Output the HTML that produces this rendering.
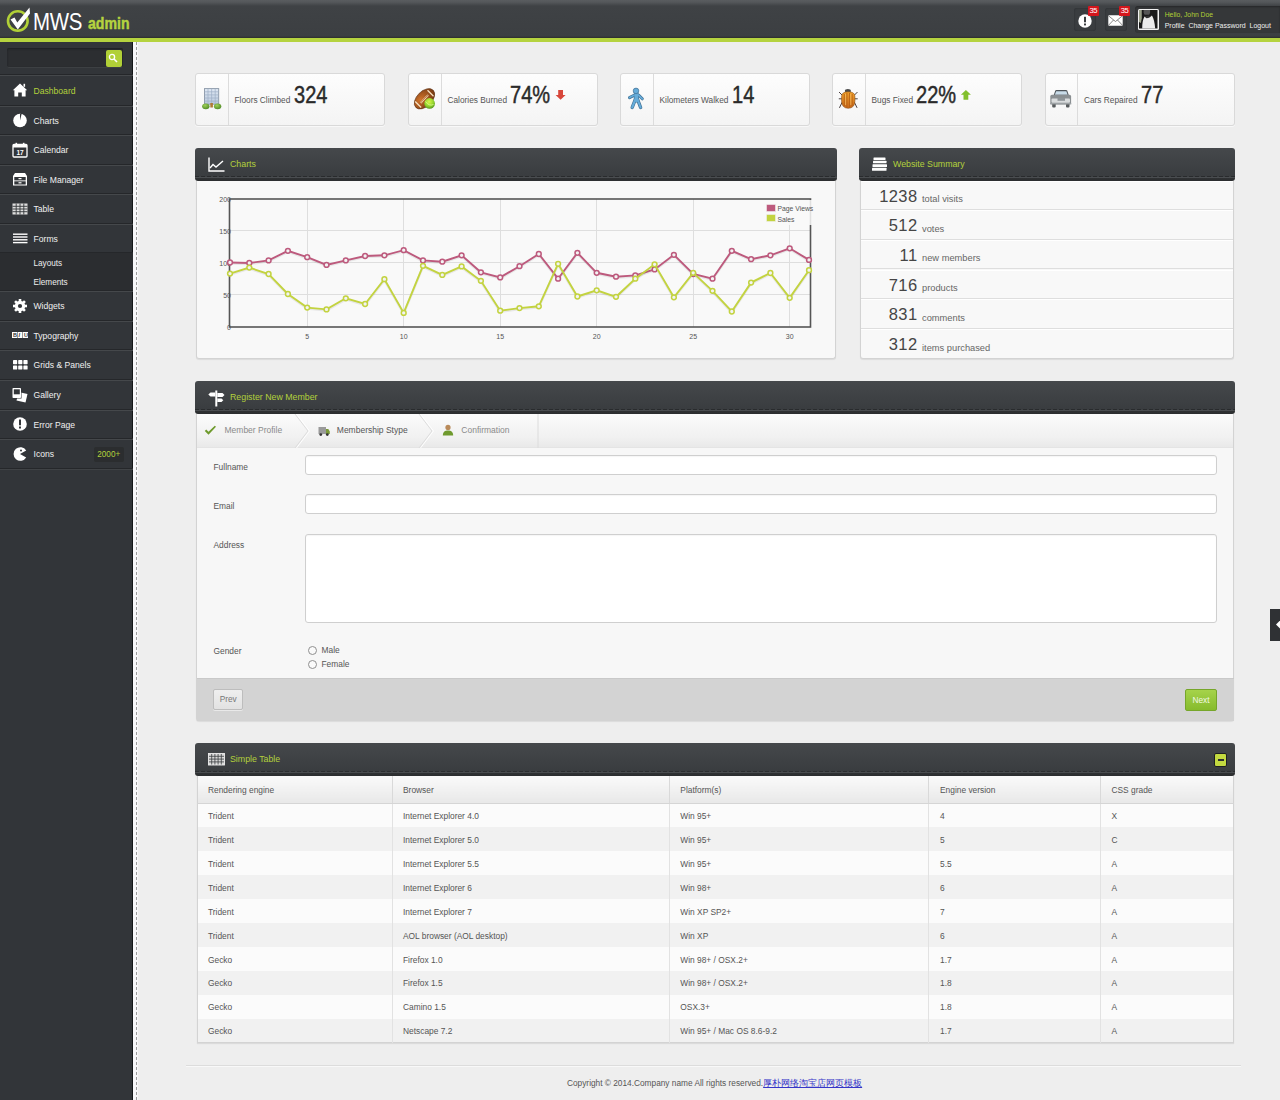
<!DOCTYPE html>
<html><head><meta charset="utf-8">
<style>
*{margin:0;padding:0;box-sizing:border-box}
html,body{width:1280px;height:1100px;overflow:hidden}
body{font-family:"Liberation Sans",sans-serif;background:#eeeeee;position:relative;color:#444}
.a{position:absolute}
#hdr{left:0;top:0;width:1280px;height:38px;background:linear-gradient(#5a5d60 0,#55585b 2px,#3f4245 6px,#3c3f42 36px,#2c2e2c 38px)}
#gline{left:0;top:38px;width:1280px;height:4px;background:#b5d33f}
#side{left:0;top:42px;width:133px;height:1058px;background:#323539;border-right:1.5px solid #141618}
#sideline{left:133px;top:42px;width:5px;height:1058px;background:#f7f7f9}
#dash{left:136px;top:42px;width:1px;height:1058px;background:repeating-linear-gradient(#9a9a9a 0,#9a9a9a 3px,transparent 3px,transparent 5px)}
.mi{position:absolute;left:0;width:133px;border-top:1px solid #45484b;border-bottom:1px solid #25272a;color:#f0f0f0;font-size:8.6px}
.mi .t{position:absolute;left:33.5px;top:50%;margin-top:-4.3px;line-height:10px;white-space:nowrap}
.mi svg{position:absolute;left:12px;top:50%;margin-top:-8px}
.mi.act .t{color:#b3d13c}
.sub{position:absolute;left:0;width:133px;background:#2b2d30;color:#eee;font-size:8.2px}
.sub div{position:absolute;left:33.5px;line-height:10px}

.box{position:absolute;top:72.5px;width:190px;height:53.5px;border:1px solid #d9d9d9;border-radius:3px;background:linear-gradient(#fdfdfd,#f4f4f4);box-shadow:0 1px 0 rgba(255,255,255,.6)}
.box .ic{position:absolute;left:0;top:0;width:32.5px;height:100%;border-right:1px solid #dcdcdc}
.box .ic svg{position:absolute;left:6px;top:15px}
.box .lb{position:absolute;left:38.5px;top:16.5px;font-size:8.3px;line-height:10px;color:#555;white-space:nowrap}
.box .num{display:inline-block;font-size:23px;line-height:10px;color:#2a2a2a;-webkit-text-stroke:0.45px #2a2a2a;transform:scaleX(.87);transform-origin:0 100%;vertical-align:baseline;margin-left:1px}
.ph{position:absolute;height:32.5px;border-radius:3px;background:linear-gradient(#45484b 0,#3a3d40 27px,#393c3f 29px,#4a4d50 29px,#4a4d50 30px,#2f3133 30px,#2c2e30 32.5px)}
.ph:after{content:"";position:absolute;left:0;right:0;top:28px;height:1.2px;background:repeating-linear-gradient(90deg,#292b2d 0,#292b2d 4px,#3c3f42 4px,#3c3f42 6px)}
.ph .tt{position:absolute;left:35px;top:11px;font-size:8.8px;line-height:10px;color:#b3d13c;white-space:nowrap}
.ph svg{position:absolute;left:13px;top:9px}
.pb{position:absolute;background:#f8f8f8;border:1px solid #d3d3d3;border-top:none;border-radius:0 0 3px 3px;box-shadow:0 1px 1px rgba(0,0,0,.08)}
.sr{position:absolute;left:0;width:100%;height:29.6px;border-bottom:1px solid #dedede;border-top:1px solid #fff}
.sr .n{position:absolute;right:315.5px;top:6px;font-size:16.5px;line-height:16px;color:#454545;letter-spacing:0.4px}
.sr .l{position:absolute;left:61.5px;top:12.5px;font-size:9.3px;line-height:10px;color:#666;white-space:nowrap}

.steps{position:absolute;left:196.5px;top:413.5px;width:1036.5px;height:34px;background:linear-gradient(#fbfbfb 0,#f1f1f1 70%,#e9e9e9 100%);border-bottom:1px solid #e4e4e4}
.st{position:absolute;top:425px;font-size:8.5px;line-height:10px;color:#8a8a8a;white-space:nowrap}
.fl{position:absolute;left:213.5px;font-size:8.4px;line-height:10px;color:#555}
.inp{position:absolute;left:304.5px;width:912px;background:#fff;border:1px solid #cfcfcf;border-radius:3px;box-shadow:inset 0 1px 1px rgba(0,0,0,.04)}
.rad{position:absolute;left:308px;width:9px;height:9px;border:1px solid #8f8f8f;border-radius:50%;background:#fafafa}
.btn{position:absolute;font-size:8.3px;text-align:center;border-radius:2px}
table.t{position:absolute;left:196.5px;top:775.5px;width:1037px;border-collapse:collapse;font-size:8.4px;color:#555;border:1px solid #d3d3d3;border-top:none;box-shadow:0 1px 1px rgba(0,0,0,.08)}
table.t th{font-weight:normal;text-align:left;height:28px;padding:1px 0 0 10.5px;background:linear-gradient(#fafafa,#e8e8e8);border-right:1px solid #d9d9d9;border-bottom:1px solid #d5d5d5;color:#555}
table.t td{height:23.9px;padding:1.5px 0 0 10.5px;border-right:1px solid #e2e2e2}
table.t tr:nth-child(even) td{background:#fbfbfb}
table.t tr:nth-child(odd) td{background:#f1f1f1}
table.t th:last-child,table.t td:last-child{border-right:none}
.ph2:after{background:repeating-linear-gradient(90deg,#2c2e30 0,#2c2e30 4px,#3c3f42 4px,#3c3f42 6px)}
</style></head>
<body>
<div id="hdr" class="a"></div>
<div id="gline" class="a"></div>
<div id="side" class="a"></div>
<div id="sideline" class="a"></div>
<div id="dash" class="a"></div>

<!-- logo -->
<svg class="a" style="left:4px;top:5px" width="30" height="30" viewBox="0 0 30 30">
  <circle cx="13.8" cy="16" r="9.8" fill="none" stroke="#b1d037" stroke-width="2.6"/>
  <path d="M6.5 14.5 L10.5 12.5 L13.3 17.5 L25.5 2.5 L26 8.5 L13.8 24.5 Z" fill="#fff"/>
</svg>
<div class="a" style="left:33px;top:8.5px;font-size:23.5px;line-height:26px;color:#fff;transform:scaleX(0.87);transform-origin:0 0;letter-spacing:-0.3px">MWS</div>
<div class="a" style="left:87.5px;top:14px;font-size:17px;line-height:20px;color:#b5d33f;font-weight:bold;transform:scaleX(0.83);transform-origin:0 0;-webkit-text-stroke:0.5px #b5d33f">admin</div>

<!-- search -->
<div class="a" style="left:7px;top:48px;width:116px;height:20px;background:#2c2e31;border-radius:2px;box-shadow:inset 0 1px 2px #1e2022;border-bottom:1px solid #3d4043"></div>
<div class="a" style="left:105.5px;top:50px;width:16.5px;height:16.5px;background:#b1d037;border-radius:2px"></div>
<svg class="a" style="left:107px;top:52px" width="13" height="13" viewBox="0 0 13 13"><circle cx="5" cy="5" r="2.6" fill="none" stroke="#fff" stroke-width="1.3"/><path d="M7 7 L10 10" stroke="#fff" stroke-width="1.6"/></svg>
<div class="a" style="left:0;top:74px;width:133px;height:1px;background:#25272a"></div>

<!-- menu -->
<div class="mi act" style="top:75px;height:30.5px"><svg width="16" height="16" viewBox="0 0 16 16"><path d="M8 1.5 L15.2 8.2 L13.6 8.2 L13.6 14.5 L9.8 14.5 L9.8 10.5 L6.2 10.5 L6.2 14.5 L2.4 14.5 L2.4 8.2 L0.8 8.2 Z" fill="#fff"/><rect x="11.5" y="1.8" width="1.6" height="3" fill="#fff"/></svg><span class="t">Dashboard</span></div>
<div class="mi" style="top:105.5px;height:29.5px"><svg width="16" height="16" viewBox="0 0 16 16"><circle cx="8" cy="8.5" r="6.8" fill="#fff"/><path d="M8 8.5 L8 1.7 L9.6 1.9 Z" fill="#323539"/></svg><span class="t">Charts</span></div>
<div class="mi" style="top:135px;height:29.5px"><svg width="16" height="16" viewBox="0 0 16 16"><rect x="1" y="2.5" width="14" height="12.5" rx="1" fill="none" stroke="#fff" stroke-width="1.3"/><rect x="1" y="2.5" width="14" height="3" fill="#fff"/><rect x="3.5" y="0.8" width="1.6" height="3" fill="#fff"/><rect x="10.9" y="0.8" width="1.6" height="3" fill="#fff"/><text x="8" y="13.2" font-size="6.5" font-weight="bold" fill="#fff" text-anchor="middle" font-family="Liberation Sans">17</text></svg><span class="t">Calendar</span></div>
<div class="mi" style="top:164.5px;height:29.5px"><svg width="16" height="16" viewBox="0 0 16 16"><path d="M1 5 L3 2 L13 2 L15 5 L15 14.5 L1 14.5 Z" fill="#fff"/><rect x="2.3" y="6" width="11.4" height="3.4" fill="#323539"/><rect x="2.3" y="10.3" width="11.4" height="3.2" fill="#323539"/><rect x="6.5" y="7" width="3" height="1.2" fill="#fff"/><rect x="6.5" y="11.2" width="3" height="1.2" fill="#fff"/></svg><span class="t">File Manager</span></div>
<div class="mi" style="top:194px;height:29.5px"><svg width="16" height="16" viewBox="0 0 16 16"><rect x="0.5" y="2.5" width="15" height="11" fill="#ddd"/><g stroke="#323539" stroke-width="0.9"><path d="M0.5 5.3 H15.5 M0.5 8 H15.5 M0.5 10.7 H15.5 M4.2 2.5 V13.5 M8 2.5 V13.5 M11.8 2.5 V13.5"/></g></svg><span class="t">Table</span></div>
<div class="mi" style="top:223.5px;height:29.5px"><svg width="16" height="16" viewBox="0 0 16 16"><g fill="#fff"><rect x="1" y="3.5" width="14.5" height="1.4"/><rect x="1" y="6.3" width="14.5" height="1.4"/><rect x="1" y="9.1" width="14.5" height="1.4"/><rect x="1" y="11.9" width="14.5" height="1.4"/></g></svg><span class="t">Forms</span></div>
<div class="sub" style="top:253px;height:37.5px"><div style="top:6px">Layouts</div><div style="top:24.5px">Elements</div></div>
<div class="a" style="left:0;top:290px;width:133px;height:1px;background:#25272a"></div>
<div class="mi" style="top:290.5px;height:30px"><svg width="16" height="16" viewBox="0 0 16 16"><g fill="#fff" transform="translate(8 8)"><circle r="5.2"/><g id="tooth"><rect x="-1.3" y="-7" width="2.6" height="3"/></g><use href="#tooth" transform="rotate(45)"/><use href="#tooth" transform="rotate(90)"/><use href="#tooth" transform="rotate(135)"/><use href="#tooth" transform="rotate(180)"/><use href="#tooth" transform="rotate(225)"/><use href="#tooth" transform="rotate(270)"/><use href="#tooth" transform="rotate(315)"/></g><circle cx="8" cy="8" r="2.1" fill="#323539"/></svg><span class="t">Widgets</span></div>
<div class="mi" style="top:320.5px;height:29.5px"><svg width="16" height="16" viewBox="0 0 16 16"><g fill="#fff"><rect x="0" y="5" width="5" height="6"/><rect x="5.5" y="5" width="5" height="6"/><rect x="11" y="5" width="5" height="6"/></g><g fill="#323539" font-family="Liberation Sans" font-size="5.5" font-weight="bold"><text x="1" y="10">B</text><text x="6.5" y="10" font-style="italic">I</text><text x="12" y="10">U</text></g></svg><span class="t">Typography</span></div>
<div class="mi" style="top:350px;height:29.5px"><svg width="16" height="16" viewBox="0 0 16 16"><g fill="#fff"><rect x="1" y="3" width="4.2" height="4.2" rx="0.7"/><rect x="6.2" y="3" width="4.2" height="4.2" rx="0.7"/><rect x="11.4" y="3" width="4.2" height="4.2" rx="0.7"/><rect x="1" y="8.4" width="4.2" height="4.2" rx="0.7"/><rect x="6.2" y="8.4" width="4.2" height="4.2" rx="0.7"/><rect x="11.4" y="8.4" width="4.2" height="4.2" rx="0.7"/></g></svg><span class="t">Grids &amp; Panels</span></div>
<div class="mi" style="top:379.5px;height:30px"><svg width="16" height="16" viewBox="0 0 16 16"><path d="M6.5 5 L15.5 7 L13.5 15.5 L4.5 13.5 Z" fill="#fff"/><rect x="0" y="1" width="9.5" height="10.5" fill="#323539"/><rect x="0.5" y="1" width="8.5" height="10" rx="0.8" fill="#fff"/><rect x="1.8" y="2.3" width="6" height="5" fill="#323539"/></svg><span class="t">Gallery</span></div>
<div class="mi" style="top:409.5px;height:29.5px"><svg width="16" height="16" viewBox="0 0 16 16"><circle cx="8" cy="8" r="6.8" fill="#fff"/><rect x="7" y="3.5" width="2" height="5.8" fill="#323539"/><rect x="7" y="10.5" width="2" height="2" fill="#323539"/></svg><span class="t">Error Page</span></div>
<div class="mi" style="top:439px;height:29.5px"><svg width="16" height="16" viewBox="0 0 16 16"><path d="M8 8 L14.2 4.5 A6.8 6.8 0 1 0 14.2 11.5 Z" fill="#fff"/><circle cx="9" cy="4.6" r="1" fill="#323539"/></svg><span class="t">Icons</span>
<div class="a" style="left:94px;top:6.5px;width:29.5px;height:15px;background:#2b2d2f;border-radius:2px;color:#b3d13c;font-size:8.2px;line-height:15px;text-align:center">2000+</div></div>


<div class="a" style="left:0;top:469px;width:133px;height:1px;background:#404346"></div>
<!-- stat boxes -->
<div class="box" style="left:195px"><div class="ic"></div><div class="lb">Floors Climbed <span class="num">324</span></div></div>
<div class="box" style="left:408px"><div class="ic"></div><div class="lb">Calories Burned <span class="num">74%</span></div></div>
<div class="box" style="left:620px"><div class="ic"></div><div class="lb">Kilometers Walked <span class="num">14</span></div></div>
<div class="box" style="left:832px"><div class="ic"></div><div class="lb">Bugs Fixed <span class="num">22%</span></div></div>
<div class="box" style="left:1044.5px"><div class="ic"></div><div class="lb">Cars Repaired <span class="num">77</span></div></div>
<svg class="a" style="left:0;top:0" width="1280" height="140" viewBox="0 0 1280 140">
 <defs>
  <linearGradient id="bld" x1="0" y1="0" x2="0" y2="1"><stop offset="0" stop-color="#dfe8f3"/><stop offset="1" stop-color="#b9c8dc"/></linearGradient>
  <radialGradient id="bush" cx="0.4" cy="0.35" r="0.7"><stop offset="0" stop-color="#9fd05a"/><stop offset="1" stop-color="#4f8a25"/></radialGradient>
  <radialGradient id="ball" cx="0.35" cy="0.35" r="0.75"><stop offset="0" stop-color="#d2752c"/><stop offset="1" stop-color="#6e3410"/></radialGradient>
  <radialGradient id="tball" cx="0.45" cy="0.35" r="0.7"><stop offset="0" stop-color="#d8f54a"/><stop offset="0.6" stop-color="#8fd22c"/><stop offset="1" stop-color="#4c8a1c"/></radialGradient>
  <linearGradient id="bugg" x1="0" y1="0" x2="0" y2="1"><stop offset="0" stop-color="#f0a02a"/><stop offset="1" stop-color="#c8661a"/></linearGradient>
 </defs>
 <!-- building -->
 <rect x="204.5" y="88.6" width="14.2" height="15.6" fill="url(#bld)" stroke="#8996a6" stroke-width="0.9"/>
 <g stroke="#9eafc5" stroke-width="0.7"><path d="M204.5 91.8H218.7M204.5 94.9H218.7M204.5 98H218.7M204.5 101.1H218.7M208 88.6V104.2M211.6 88.6V104.2M215.2 88.6V104.2"/></g>
 <rect x="210.3" y="103" width="2.6" height="4.5" fill="#b07a35"/>
 <ellipse cx="205.8" cy="106.3" rx="3.7" ry="2.9" fill="url(#bush)"/>
 <ellipse cx="217.6" cy="106.3" rx="3.7" ry="2.9" fill="url(#bush)"/>
 <!-- football -->
 <ellipse cx="424.5" cy="98.8" rx="12.2" ry="7.6" transform="rotate(-45 424.5 98.8)" fill="url(#ball)" stroke="#5a2a0c" stroke-width="0.6"/>
 <path d="M415.2 101.5 L421.2 107.5 M427.5 90.3 L433.5 96.3" stroke="#f6e2c4" stroke-width="1.3"/>
 <path d="M420.8 102.8 L428.3 95" stroke="#f6e2c4" stroke-width="2" stroke-dasharray="0.8 0.7"/>
 <circle cx="429.6" cy="103.4" r="5.3" fill="url(#tball)"/>
 <path d="M425.5 101.5 Q429 106.5 433.5 104.5" fill="none" stroke="#e9ffa0" stroke-width="0.9" opacity="0.8"/>
 <!-- walker -->
 <g stroke="#3f6f92" stroke-linecap="round" stroke-linejoin="round" fill="none">
  <path d="M634 95.3 L629.5 97.6" stroke-width="3"/>
  <path d="M638.6 95 L642.3 98.8" stroke-width="3"/>
  <path d="M635.3 99.5 L632.2 107.5 M637.6 99.5 L640.6 107.5" stroke-width="3.4"/>
  <path d="M636.3 94.5 L636.5 100" stroke-width="5.2"/>
 </g>
 <g stroke="#66acd9" stroke-linecap="round" stroke-linejoin="round" fill="none">
  <path d="M634 95.3 L629.5 97.6" stroke-width="1.7"/>
  <path d="M638.6 95 L642.3 98.8" stroke-width="1.7"/>
  <path d="M635.3 99.5 L632.2 107.5 M637.6 99.5 L640.6 107.5" stroke-width="2.1"/>
  <path d="M636.3 94.5 L636.5 100" stroke-width="3.9"/>
 </g>
 <circle cx="636" cy="90.9" r="2.8" fill="#66acd9" stroke="#3f6f92" stroke-width="0.7"/>
 <!-- bug -->
 <g stroke="#4a4040" stroke-width="1" fill="none" stroke-linecap="round">
  <path d="M842 95 L839.3 92.3 M854.5 95 L857.2 92.3 M841.5 98.8 L839.2 98.8 M855 98.8 L857.3 98.8 M842 102.5 L839.6 107.5 M854.5 102.5 L856.9 107.5"/>
 </g>
 <ellipse cx="847.9" cy="90.9" rx="3" ry="1.8" fill="#4a4a4a"/>
 <path d="M841.6 96.5 Q841.6 91.8 848.2 91.8 Q854.9 91.8 854.9 96.5 L854.9 101 Q854.9 108 848.2 108.3 Q841.6 108 841.6 101 Z" fill="url(#bugg)" stroke="#8a4d10" stroke-width="0.6"/>
 <path d="M844.3 94 V106 M846.9 93 V107.5 M849.5 93 V107.5 M852.1 94 V106" stroke="#b35e12" stroke-width="0.8"/>
 <path d="M845.6 94 V105 M850.8 94 V105" stroke="#ffd27a" stroke-width="0.7" opacity="0.8"/>
 <!-- car -->
 <path d="M1053.6 95.5 L1055.3 90.6 Q1055.6 89.9 1056.5 89.9 L1066 89.9 Q1066.9 89.9 1067.2 90.6 L1068.9 95.5 Z" fill="#4d5358"/>
 <path d="M1054.8 94.7 L1056.2 91.3 L1066.3 91.3 L1067.7 94.7 Z" fill="#c8dbe8"/>
 <rect x="1050.3" y="94.8" width="20.8" height="9.6" rx="1.6" fill="#8a8f92"/>
 <rect x="1051.5" y="98.5" width="18.5" height="4.3" rx="1" fill="#d9dcdd"/>
 <rect x="1057.5" y="97.8" width="7.5" height="3" fill="#8e9498"/>
 <rect x="1052.2" y="103.5" width="3.5" height="4" rx="1" fill="#575b5d"/>
 <rect x="1066" y="103.5" width="3.5" height="4" rx="1" fill="#575b5d"/>
 <rect x="1050" y="103" width="21.3" height="1.4" fill="#9da2a5"/>
 <!-- arrows -->
 <path d="M558.2 90 H563 V95 H565.6 L560.6 99.8 L555.6 95 H558.2 Z" fill="#d8473b"/>
 <path d="M963.5 99.8 H968.3 V94.8 H970.9 L965.9 90 L960.9 94.8 H963.5 Z" fill="#82c02c"/>
</svg>

<!-- charts panel -->
<div class="ph" style="left:195px;top:148px;width:641.5px"><svg width="17" height="15" viewBox="0 0 17 15"><path d="M1 0.5V14H16.5" fill="none" stroke="#fff" stroke-width="1.4"/><path d="M2 11 L5 7.5 L8 10 L15 4" fill="none" stroke="#fff" stroke-width="1.4"/></svg><div class="tt">Charts</div></div>
<div class="pb" style="left:196px;top:180.5px;width:639.5px;height:178px"></div>
<svg class="a" style="left:0;top:0" width="1280" height="1100" viewBox="0 0 1280 1100">
<rect x="229.5" y="199" width="581" height="128" fill="#f9f9f9"/>
<g stroke="#dedede" stroke-width="1"><path d="M229.5 294.5H810.5"/><path d="M229.5 262.5H810.5"/><path d="M229.5 230.5H810.5"/><path d="M307.5 199V327"/><path d="M403.5 199V327"/><path d="M500.5 199V327"/><path d="M596.5 199V327"/><path d="M693.5 199V327"/><path d="M789.5 199V327"/></g>
<rect x="229.5" y="199" width="581" height="128" fill="none" stroke="#555" stroke-width="1.6"/>
<g font-family="Liberation Sans" font-size="7" fill="#545454"><text x="231" y="329.5" text-anchor="end">0</text><text x="231" y="297.5" text-anchor="end">50</text><text x="231" y="265.5" text-anchor="end">100</text><text x="231" y="233.5" text-anchor="end">150</text><text x="231" y="201.5" text-anchor="end">200</text><text x="307.2" y="339" text-anchor="middle">5</text><text x="403.7" y="339" text-anchor="middle">10</text><text x="500.2" y="339" text-anchor="middle">15</text><text x="596.7" y="339" text-anchor="middle">20</text><text x="693.2" y="339" text-anchor="middle">25</text><text x="789.7" y="339" text-anchor="middle">30</text></g>
<polyline points="230.0,262.5 249.3,263.0 268.6,260.4 287.9,250.8 307.2,257.2 326.5,264.9 345.8,260.4 365.1,256.0 384.4,255.3 403.7,250.2 423.0,260.4 442.3,261.7 461.6,255.3 480.9,272.3 500.2,277.4 519.5,266.2 538.8,254.0 558.1,278.7 577.4,252.8 596.7,272.8 616.0,276.7 635.3,275.4 654.6,269.4 673.9,254.8 693.2,274.0 712.5,278.7 731.8,250.8 751.1,259.2 770.4,255.3 789.7,248.3 809.0,259.9" fill="none" stroke="rgba(0,0,0,0.07)" stroke-width="2.5" transform="translate(0 1)"/>
<polyline points="230.0,262.5 249.3,263.0 268.6,260.4 287.9,250.8 307.2,257.2 326.5,264.9 345.8,260.4 365.1,256.0 384.4,255.3 403.7,250.2 423.0,260.4 442.3,261.7 461.6,255.3 480.9,272.3 500.2,277.4 519.5,266.2 538.8,254.0 558.1,278.7 577.4,252.8 596.7,272.8 616.0,276.7 635.3,275.4 654.6,269.4 673.9,254.8 693.2,274.0 712.5,278.7 731.8,250.8 751.1,259.2 770.4,255.3 789.7,248.3 809.0,259.9" fill="none" stroke="#bd5a7d" stroke-width="1.9"/>
<circle cx="230.0" cy="262.5" r="2.4" fill="#f3f3f3" stroke="#bd5a7d" stroke-width="1.5"/>
<circle cx="249.3" cy="263.0" r="2.4" fill="#f3f3f3" stroke="#bd5a7d" stroke-width="1.5"/>
<circle cx="268.6" cy="260.4" r="2.4" fill="#f3f3f3" stroke="#bd5a7d" stroke-width="1.5"/>
<circle cx="287.9" cy="250.8" r="2.4" fill="#f3f3f3" stroke="#bd5a7d" stroke-width="1.5"/>
<circle cx="307.2" cy="257.2" r="2.4" fill="#f3f3f3" stroke="#bd5a7d" stroke-width="1.5"/>
<circle cx="326.5" cy="264.9" r="2.4" fill="#f3f3f3" stroke="#bd5a7d" stroke-width="1.5"/>
<circle cx="345.8" cy="260.4" r="2.4" fill="#f3f3f3" stroke="#bd5a7d" stroke-width="1.5"/>
<circle cx="365.1" cy="256.0" r="2.4" fill="#f3f3f3" stroke="#bd5a7d" stroke-width="1.5"/>
<circle cx="384.4" cy="255.3" r="2.4" fill="#f3f3f3" stroke="#bd5a7d" stroke-width="1.5"/>
<circle cx="403.7" cy="250.2" r="2.4" fill="#f3f3f3" stroke="#bd5a7d" stroke-width="1.5"/>
<circle cx="423.0" cy="260.4" r="2.4" fill="#f3f3f3" stroke="#bd5a7d" stroke-width="1.5"/>
<circle cx="442.3" cy="261.7" r="2.4" fill="#f3f3f3" stroke="#bd5a7d" stroke-width="1.5"/>
<circle cx="461.6" cy="255.3" r="2.4" fill="#f3f3f3" stroke="#bd5a7d" stroke-width="1.5"/>
<circle cx="480.9" cy="272.3" r="2.4" fill="#f3f3f3" stroke="#bd5a7d" stroke-width="1.5"/>
<circle cx="500.2" cy="277.4" r="2.4" fill="#f3f3f3" stroke="#bd5a7d" stroke-width="1.5"/>
<circle cx="519.5" cy="266.2" r="2.4" fill="#f3f3f3" stroke="#bd5a7d" stroke-width="1.5"/>
<circle cx="538.8" cy="254.0" r="2.4" fill="#f3f3f3" stroke="#bd5a7d" stroke-width="1.5"/>
<circle cx="558.1" cy="278.7" r="2.4" fill="#f3f3f3" stroke="#bd5a7d" stroke-width="1.5"/>
<circle cx="577.4" cy="252.8" r="2.4" fill="#f3f3f3" stroke="#bd5a7d" stroke-width="1.5"/>
<circle cx="596.7" cy="272.8" r="2.4" fill="#f3f3f3" stroke="#bd5a7d" stroke-width="1.5"/>
<circle cx="616.0" cy="276.7" r="2.4" fill="#f3f3f3" stroke="#bd5a7d" stroke-width="1.5"/>
<circle cx="635.3" cy="275.4" r="2.4" fill="#f3f3f3" stroke="#bd5a7d" stroke-width="1.5"/>
<circle cx="654.6" cy="269.4" r="2.4" fill="#f3f3f3" stroke="#bd5a7d" stroke-width="1.5"/>
<circle cx="673.9" cy="254.8" r="2.4" fill="#f3f3f3" stroke="#bd5a7d" stroke-width="1.5"/>
<circle cx="693.2" cy="274.0" r="2.4" fill="#f3f3f3" stroke="#bd5a7d" stroke-width="1.5"/>
<circle cx="712.5" cy="278.7" r="2.4" fill="#f3f3f3" stroke="#bd5a7d" stroke-width="1.5"/>
<circle cx="731.8" cy="250.8" r="2.4" fill="#f3f3f3" stroke="#bd5a7d" stroke-width="1.5"/>
<circle cx="751.1" cy="259.2" r="2.4" fill="#f3f3f3" stroke="#bd5a7d" stroke-width="1.5"/>
<circle cx="770.4" cy="255.3" r="2.4" fill="#f3f3f3" stroke="#bd5a7d" stroke-width="1.5"/>
<circle cx="789.7" cy="248.3" r="2.4" fill="#f3f3f3" stroke="#bd5a7d" stroke-width="1.5"/>
<circle cx="809.0" cy="259.9" r="2.4" fill="#f3f3f3" stroke="#bd5a7d" stroke-width="1.5"/>
<polyline points="230.0,273.6 249.3,267.6 268.6,274.0 287.9,294.0 307.2,307.6 326.5,309.4 345.8,298.3 365.1,304.0 384.4,279.2 403.7,312.9 423.0,265.8 442.3,274.9 461.6,266.4 480.9,280.8 500.2,310.7 519.5,308.1 538.8,306.3 558.1,263.8 577.4,296.5 596.7,290.3 616.0,296.8 635.3,278.7 654.6,264.3 673.9,297.3 693.2,272.8 712.5,290.8 731.8,311.5 751.1,282.6 770.4,273.0 789.7,297.8 809.0,270.2" fill="none" stroke="rgba(0,0,0,0.07)" stroke-width="2.5" transform="translate(0 1)"/>
<polyline points="230.0,273.6 249.3,267.6 268.6,274.0 287.9,294.0 307.2,307.6 326.5,309.4 345.8,298.3 365.1,304.0 384.4,279.2 403.7,312.9 423.0,265.8 442.3,274.9 461.6,266.4 480.9,280.8 500.2,310.7 519.5,308.1 538.8,306.3 558.1,263.8 577.4,296.5 596.7,290.3 616.0,296.8 635.3,278.7 654.6,264.3 673.9,297.3 693.2,272.8 712.5,290.8 731.8,311.5 751.1,282.6 770.4,273.0 789.7,297.8 809.0,270.2" fill="none" stroke="#c3d340" stroke-width="1.9"/>
<circle cx="230.0" cy="273.6" r="2.4" fill="#f3f3f3" stroke="#c3d340" stroke-width="1.5"/>
<circle cx="249.3" cy="267.6" r="2.4" fill="#f3f3f3" stroke="#c3d340" stroke-width="1.5"/>
<circle cx="268.6" cy="274.0" r="2.4" fill="#f3f3f3" stroke="#c3d340" stroke-width="1.5"/>
<circle cx="287.9" cy="294.0" r="2.4" fill="#f3f3f3" stroke="#c3d340" stroke-width="1.5"/>
<circle cx="307.2" cy="307.6" r="2.4" fill="#f3f3f3" stroke="#c3d340" stroke-width="1.5"/>
<circle cx="326.5" cy="309.4" r="2.4" fill="#f3f3f3" stroke="#c3d340" stroke-width="1.5"/>
<circle cx="345.8" cy="298.3" r="2.4" fill="#f3f3f3" stroke="#c3d340" stroke-width="1.5"/>
<circle cx="365.1" cy="304.0" r="2.4" fill="#f3f3f3" stroke="#c3d340" stroke-width="1.5"/>
<circle cx="384.4" cy="279.2" r="2.4" fill="#f3f3f3" stroke="#c3d340" stroke-width="1.5"/>
<circle cx="403.7" cy="312.9" r="2.4" fill="#f3f3f3" stroke="#c3d340" stroke-width="1.5"/>
<circle cx="423.0" cy="265.8" r="2.4" fill="#f3f3f3" stroke="#c3d340" stroke-width="1.5"/>
<circle cx="442.3" cy="274.9" r="2.4" fill="#f3f3f3" stroke="#c3d340" stroke-width="1.5"/>
<circle cx="461.6" cy="266.4" r="2.4" fill="#f3f3f3" stroke="#c3d340" stroke-width="1.5"/>
<circle cx="480.9" cy="280.8" r="2.4" fill="#f3f3f3" stroke="#c3d340" stroke-width="1.5"/>
<circle cx="500.2" cy="310.7" r="2.4" fill="#f3f3f3" stroke="#c3d340" stroke-width="1.5"/>
<circle cx="519.5" cy="308.1" r="2.4" fill="#f3f3f3" stroke="#c3d340" stroke-width="1.5"/>
<circle cx="538.8" cy="306.3" r="2.4" fill="#f3f3f3" stroke="#c3d340" stroke-width="1.5"/>
<circle cx="558.1" cy="263.8" r="2.4" fill="#f3f3f3" stroke="#c3d340" stroke-width="1.5"/>
<circle cx="577.4" cy="296.5" r="2.4" fill="#f3f3f3" stroke="#c3d340" stroke-width="1.5"/>
<circle cx="596.7" cy="290.3" r="2.4" fill="#f3f3f3" stroke="#c3d340" stroke-width="1.5"/>
<circle cx="616.0" cy="296.8" r="2.4" fill="#f3f3f3" stroke="#c3d340" stroke-width="1.5"/>
<circle cx="635.3" cy="278.7" r="2.4" fill="#f3f3f3" stroke="#c3d340" stroke-width="1.5"/>
<circle cx="654.6" cy="264.3" r="2.4" fill="#f3f3f3" stroke="#c3d340" stroke-width="1.5"/>
<circle cx="673.9" cy="297.3" r="2.4" fill="#f3f3f3" stroke="#c3d340" stroke-width="1.5"/>
<circle cx="693.2" cy="272.8" r="2.4" fill="#f3f3f3" stroke="#c3d340" stroke-width="1.5"/>
<circle cx="712.5" cy="290.8" r="2.4" fill="#f3f3f3" stroke="#c3d340" stroke-width="1.5"/>
<circle cx="731.8" cy="311.5" r="2.4" fill="#f3f3f3" stroke="#c3d340" stroke-width="1.5"/>
<circle cx="751.1" cy="282.6" r="2.4" fill="#f3f3f3" stroke="#c3d340" stroke-width="1.5"/>
<circle cx="770.4" cy="273.0" r="2.4" fill="#f3f3f3" stroke="#c3d340" stroke-width="1.5"/>
<circle cx="789.7" cy="297.8" r="2.4" fill="#f3f3f3" stroke="#c3d340" stroke-width="1.5"/>
<circle cx="809.0" cy="270.2" r="2.4" fill="#f3f3f3" stroke="#c3d340" stroke-width="1.5"/>
<rect x="764" y="200" width="48" height="25" fill="#f9f9f9" opacity="0.85"/>
<rect x="766.5" y="204.5" width="9" height="7" fill="#bd5a7d" stroke="#f0f0f0" stroke-width="0.6"/>
<rect x="766.5" y="214.5" width="9" height="7" fill="#c3d340" stroke="#f0f0f0" stroke-width="0.6"/>
<g font-family="Liberation Sans" font-size="6.8" fill="#545454"><text x="777.5" y="211">Page Views</text><text x="777.5" y="221.5">Sales</text></g>
</svg>

<!-- summary panel -->
<div class="ph" style="left:858.5px;top:148px;width:376px"><svg width="16" height="14" viewBox="0 0 16 14"><g fill="#fff"><rect x="1.5" y="0.5" width="12" height="2.5" rx="0.5"/><rect x="1" y="3.8" width="13.5" height="2.5" rx="0.5"/><rect x="0.5" y="7.2" width="14.5" height="2.8" rx="0.5"/><rect x="0" y="10.7" width="14.5" height="3" rx="0.5"/></g></svg><div class="tt" style="left:34.5px">Website Summary</div></div>
<div class="pb" style="left:859.5px;top:180.5px;width:374.5px;height:178.5px">
<div class="sr" style="top:0"><span class="n">1238</span><span class="l">total visits</span></div>
<div class="sr" style="top:29.7px"><span class="n">512</span><span class="l">votes</span></div>
<div class="sr" style="top:59.4px"><span class="n">11</span><span class="l">new members</span></div>
<div class="sr" style="top:89.1px"><span class="n">716</span><span class="l">products</span></div>
<div class="sr" style="top:118.8px"><span class="n">831</span><span class="l">comments</span></div>
<div class="sr" style="top:148.5px;border-bottom:none"><span class="n">312</span><span class="l">items purchased</span></div>
</div>


<!-- register panel -->
<div class="ph" style="left:195px;top:381px;width:1040px"><svg width="17" height="17" viewBox="0 0 17 17"><rect x="7.3" y="0.5" width="2" height="16" fill="#fff"/><path d="M2.5 2.5H7.3V6.5H2.5L0.3 4.5Z" fill="#fff"/><path d="M9.3 3H14.5L16.5 5L14.5 7H9.3Z" fill="#fff"/><path d="M9.3 8.5H13.5L15.3 10.3L13.5 12.1H9.3Z" fill="#fff"/></svg><div class="tt" style="left:35px">Register New Member</div></div>
<div class="pb" style="left:196px;top:413.5px;width:1038px;height:307.5px;background:#f7f7f7"></div>
<div class="steps"></div>
<svg class="a" style="left:196.5px;top:413.5px" width="400" height="34" viewBox="0 0 400 34">
 <path d="M98 0 L111 17 L98 34" fill="none" stroke="#dcdcdc" stroke-width="1"/>
 <path d="M99.5 0 L112.5 17 L99.5 34" fill="none" stroke="#fff" stroke-width="1"/>
 <path d="M222 0 L235 17 L222 34" fill="none" stroke="#dcdcdc" stroke-width="1"/>
 <path d="M223.5 0 L236.5 17 L223.5 34" fill="none" stroke="#fff" stroke-width="1"/>
 <path d="M341 0 V34" stroke="#dcdcdc" stroke-width="1"/>
</svg>
<svg class="a" style="left:204px;top:425px" width="13" height="12" viewBox="0 0 13 12"><path d="M0.8 6 L4.5 9.8 L12 1.8 L10.8 0.8 L4.5 6.8 L2.2 4.5 Z" fill="#6e9a2c"/></svg>
<div class="st" style="left:224.5px">Member Profile</div>
<svg class="a" style="left:317.5px;top:425px" width="12" height="12" viewBox="0 0 12 12"><rect x="0.5" y="2" width="7.5" height="7" fill="#9a9a9a"/><path d="M8 4H10.3L11.8 6.5V9H8Z" fill="#7a9a3a"/><circle cx="2.8" cy="9.6" r="1.4" fill="#333"/><circle cx="9.3" cy="9.6" r="1.4" fill="#333"/></svg>
<div class="st" style="left:336.8px;color:#555">Membership Stype</div>
<svg class="a" style="left:442px;top:424px" width="12" height="12" viewBox="0 0 12 12"><circle cx="6" cy="3.4" r="2.6" fill="#b98a5a"/><path d="M0.8 11.5 C1 7.5 3 6.5 6 6.5 C9 6.5 11 7.5 11.2 11.5 Z" fill="#6f9a2e"/></svg>
<div class="st" style="left:461.3px">Confirmation</div>

<div class="fl" style="top:462px">Fullname</div>
<div class="inp" style="top:455px;height:19.5px"></div>
<div class="fl" style="top:501px">Email</div>
<div class="inp" style="top:494.3px;height:19.5px"></div>
<div class="fl" style="top:540px">Address</div>
<div class="inp" style="top:533.5px;height:89px"></div>
<div class="fl" style="top:645.5px">Gender</div>
<div class="rad" style="top:645.5px"></div>
<div class="fl" style="left:321.5px;top:644.5px">Male</div>
<div class="rad" style="top:659.5px"></div>
<div class="fl" style="left:321.5px;top:658.5px">Female</div>
<div class="a" style="left:196.5px;top:677.5px;width:1037px;height:43.5px;background:#d3d3d3;border-top:1px solid #c9c9c9"></div>
<div class="btn" style="left:213.3px;top:689.3px;width:29.8px;height:21px;line-height:19px;background:linear-gradient(#efefef,#e2e2e2);border:1px solid #bdbdbd;color:#777;box-shadow:0 1px 0 rgba(255,255,255,.5)">Prev</div>
<div class="btn" style="left:1185px;top:688.8px;width:32px;height:22px;line-height:20px;background:linear-gradient(#a5d34a,#86bb2c);border:1px solid #76a62a;color:#f3f9e6">Next</div>

<!-- table panel -->
<div class="ph ph2" style="left:195px;top:743.3px;width:1040px"><svg width="17" height="14" viewBox="0 0 17 14"><rect x="0.5" y="1.5" width="16" height="11.5" fill="#d8d8d8"/><g stroke="#3a3d40" stroke-width="0.8"><path d="M0.5 4.3H16.5M0.5 7.1H16.5M0.5 9.9H16.5M3.7 1.5V13M6.9 1.5V13M10.1 1.5V13M13.3 1.5V13"/></g><rect x="0.5" y="1.5" width="16" height="11.5" fill="none" stroke="#eee" stroke-width="0.9"/></svg><div class="tt" style="left:35px">Simple Table</div>
<div class="a" style="left:1019.3px;top:9.7px;width:12.5px;height:13.7px;background:#c3d940;border:1px solid #1e2022;border-radius:2px"><div class="a" style="left:2.8px;top:5.4px;width:5.5px;height:1.8px;background:#2b2d2f"></div></div></div>
<table class="t">
<tr><th style="width:195px">Rendering engine</th><th style="width:277.3px">Browser</th><th style="width:259.7px">Platform(s)</th><th style="width:171.5px">Engine version</th><th>CSS grade</th></tr>
<tr><td>Trident</td><td>Internet Explorer 4.0</td><td>Win 95+</td><td>4</td><td>X</td></tr>
<tr><td>Trident</td><td>Internet Explorer 5.0</td><td>Win 95+</td><td>5</td><td>C</td></tr>
<tr><td>Trident</td><td>Internet Explorer 5.5</td><td>Win 95+</td><td>5.5</td><td>A</td></tr>
<tr><td>Trident</td><td>Internet Explorer 6</td><td>Win 98+</td><td>6</td><td>A</td></tr>
<tr><td>Trident</td><td>Internet Explorer 7</td><td>Win XP SP2+</td><td>7</td><td>A</td></tr>
<tr><td>Trident</td><td>AOL browser (AOL desktop)</td><td>Win XP</td><td>6</td><td>A</td></tr>
<tr><td>Gecko</td><td>Firefox 1.0</td><td>Win 98+ / OSX.2+</td><td>1.7</td><td>A</td></tr>
<tr><td>Gecko</td><td>Firefox 1.5</td><td>Win 98+ / OSX.2+</td><td>1.8</td><td>A</td></tr>
<tr><td>Gecko</td><td>Camino 1.5</td><td>OSX.3+</td><td>1.8</td><td>A</td></tr>
<tr><td>Gecko</td><td>Netscape 7.2</td><td>Win 95+ / Mac OS 8.6-9.2</td><td>1.7</td><td>A</td></tr>
</table>

<!-- footer -->
<div class="a" style="left:185.5px;top:1065px;width:1055px;height:1px;background:#dcdcdc"></div>
<div class="a" style="left:185.5px;top:1066px;width:1055px;height:1px;background:#f8f8f8"></div>
<div class="a" style="left:567px;top:1077.5px;font-size:8.3px;line-height:10px;color:#555;white-space:nowrap">Copyright © 2014.Company name All rights reserved.<span style="color:#3535c8;text-decoration:underline;font-size:8.9px">厚朴网络淘宝店网页模板</span></div>

<!-- right toggle -->
<div class="a" style="left:1270px;top:609px;width:10px;height:31.5px;background:#2f3134"></div>
<svg class="a" style="left:1273.5px;top:619px" width="8" height="11" viewBox="0 0 8 11"><path d="M6.5 1 L2 5.5 L6.5 10 Z" fill="#fff"/></svg>

<!-- header right -->
<div class="a" style="left:1074px;top:8px;width:21.5px;height:23px;background:#3a3d40;border-radius:3px;box-shadow:inset 0 0 2px rgba(0,0,0,.35)"></div>
<svg class="a" style="left:1077.5px;top:13.5px" width="14" height="14" viewBox="0 0 14 14"><circle cx="7" cy="7" r="6.7" fill="#fff"/><rect x="6" y="2.8" width="2" height="5.5" fill="#3a3d40"/><rect x="6" y="9.5" width="2" height="1.9" fill="#3a3d40"/></svg>
<div class="a" style="left:1088px;top:6px;width:10.5px;height:10px;background:#d3161c;border-radius:1px;color:#fff;font-size:7.6px;line-height:10.5px;text-align:center;letter-spacing:-0.4px">35</div>
<div class="a" style="left:1105px;top:8px;width:21.5px;height:23px;background:#3a3d40;border-radius:3px;box-shadow:inset 0 0 2px rgba(0,0,0,.35)"></div>
<svg class="a" style="left:1107.5px;top:14.5px" width="15" height="11" viewBox="0 0 15 11"><rect x="0.3" y="0.3" width="14.4" height="10.4" rx="0.6" fill="#fff"/><path d="M0.5 0.8 L7.5 6.5 L14.5 0.8 M0.5 10.3 L5.5 5 M14.5 10.3 L9.5 5" fill="none" stroke="#555" stroke-width="0.7"/></svg>
<div class="a" style="left:1119px;top:6px;width:11px;height:10px;background:#d3161c;border-radius:1px;color:#fff;font-size:7.6px;line-height:10.5px;text-align:center;letter-spacing:-0.4px">35</div>
<div class="a" style="left:1135px;top:6px;width:145px;height:27px;background:#353739;border-radius:3px 0 0 3px;box-shadow:inset 0 1px 2px rgba(0,0,0,.3)"></div>
<div class="a" style="left:1137.5px;top:8.8px;width:21.5px;height:21.3px;background:#f2f2f2;border-radius:1.5px"></div>
<svg class="a" style="left:1139px;top:10.2px" width="18.5" height="18.5" viewBox="0 0 20 20"><rect width="20" height="20" fill="#1a1a1a"/><path d="M0 0 H3 V9 L2 14 L0 13 Z" fill="#9aa08a"/><path d="M5 0 H12 V3 L11 5 H6 L5 3Z" fill="#555"/><path d="M3.5 20 C3.5 15 4 10 6 7 L8.5 9 L12 7.5 L14 6 C16 9 17 14 17.5 20 Z" fill="#ececec"/><path d="M6 7 L8.5 9 L12 7.5 L11 6 L8 6.5Z" fill="#333"/></svg>
<div class="a" style="left:1164.7px;top:11px;font-size:6.8px;line-height:8px;color:#b1d037;white-space:nowrap">Hello, John Doe</div>
<div class="a" style="left:1164.7px;top:22px;font-size:7px;line-height:8px;color:#f0f0f0;white-space:nowrap">Profile&nbsp; Change Password&nbsp; Logout</div>

</body></html>
